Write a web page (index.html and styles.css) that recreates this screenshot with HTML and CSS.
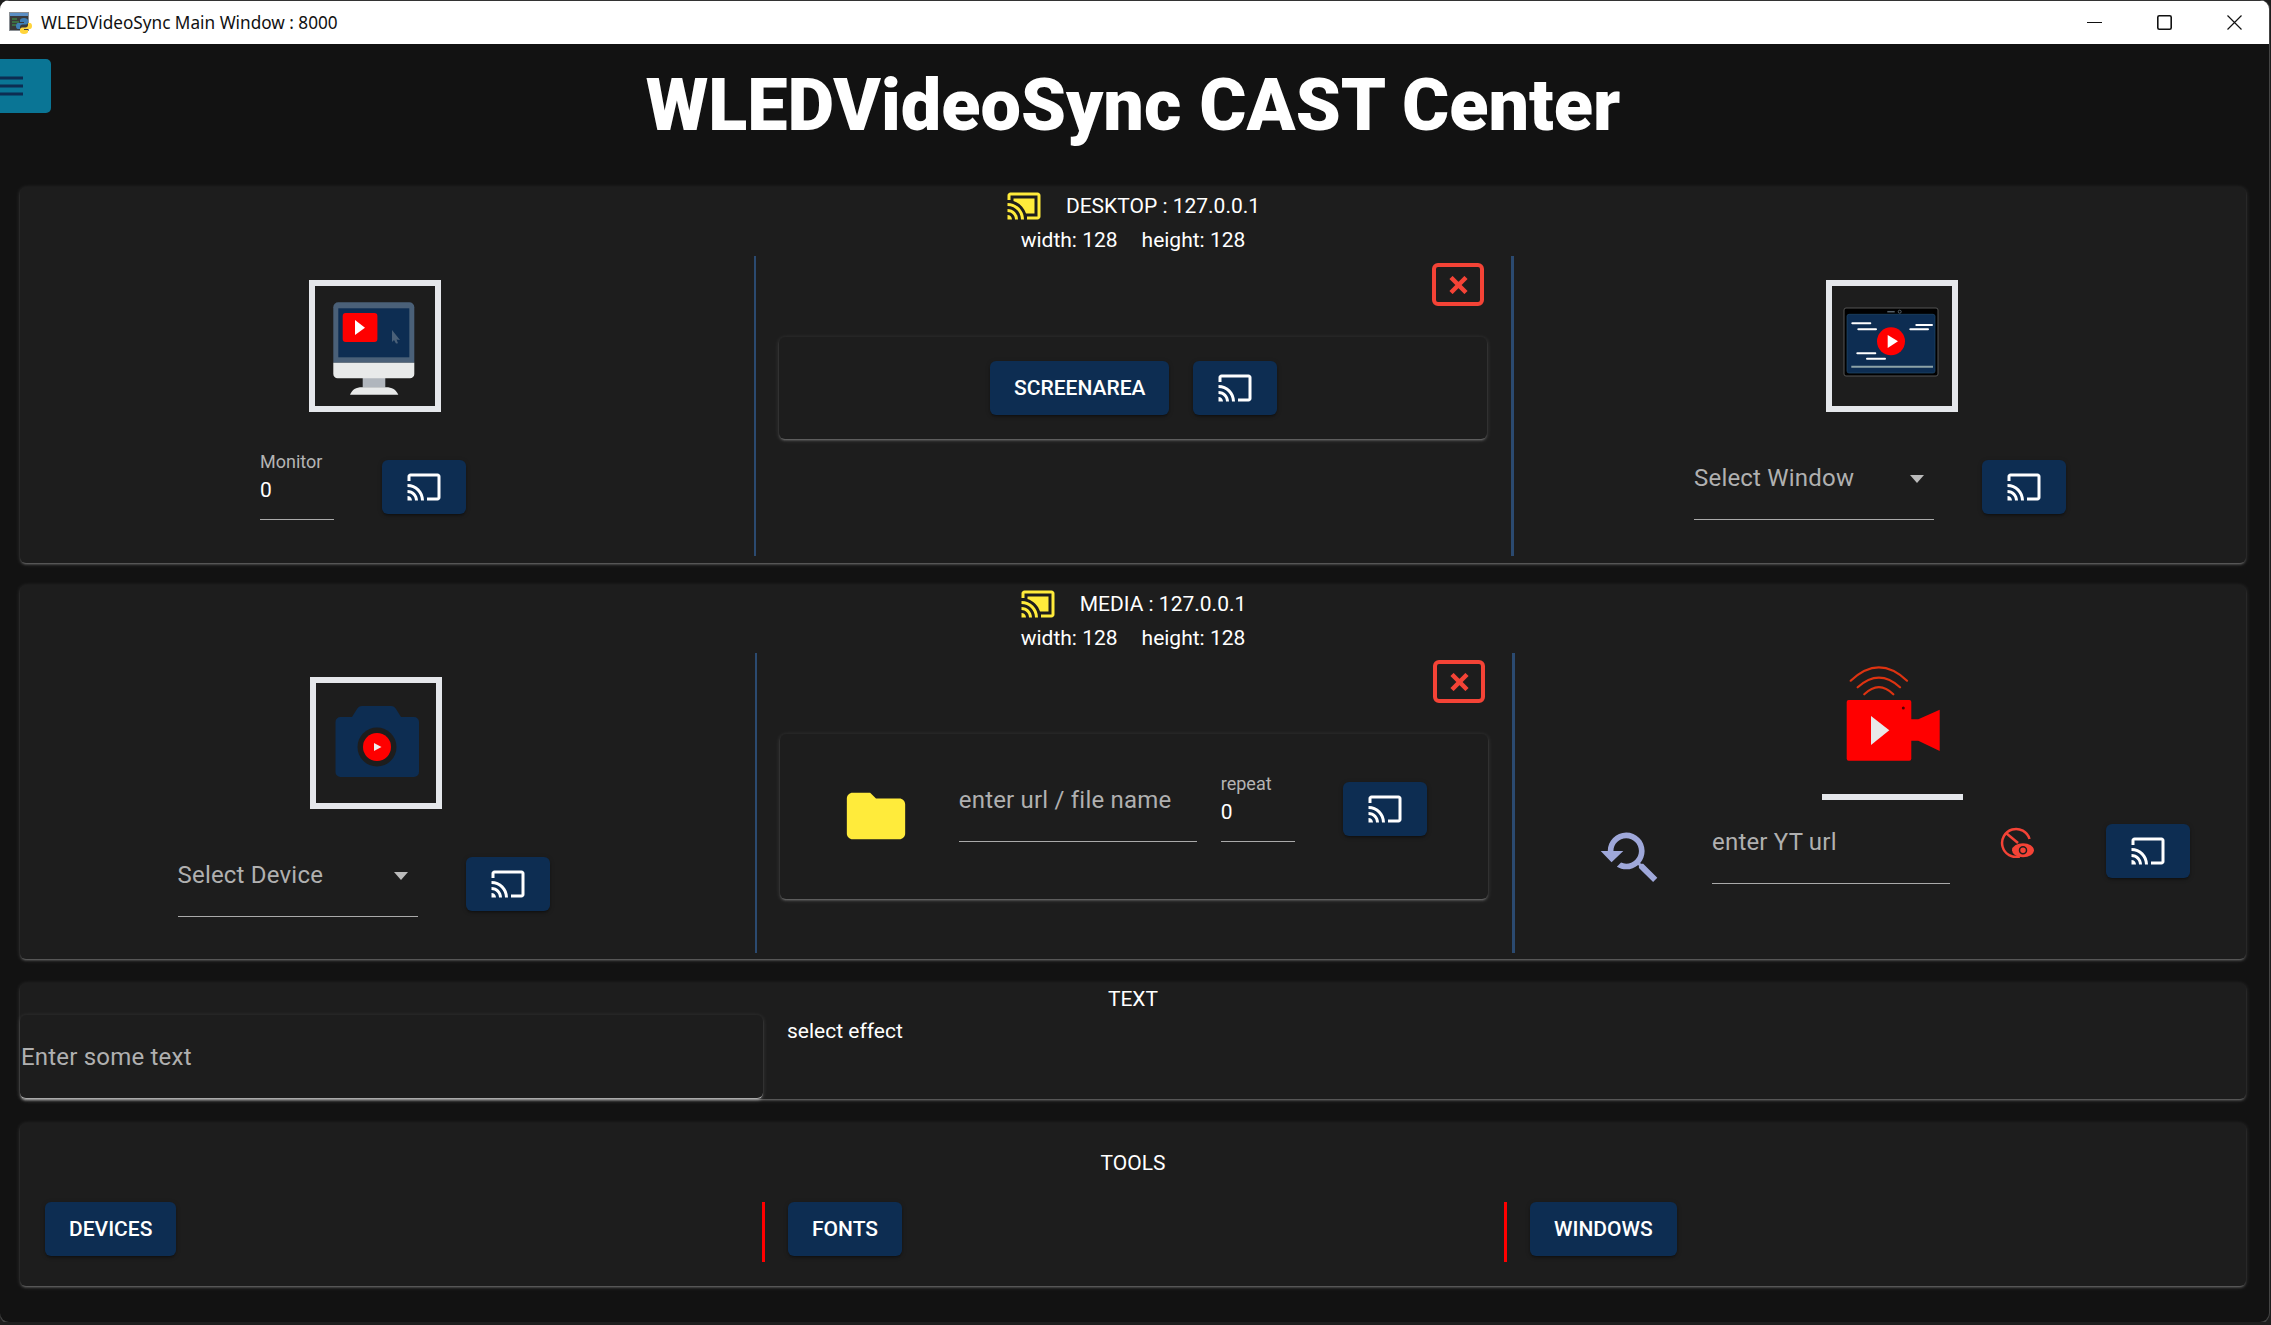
FILE: index.html
```html
<!DOCTYPE html>
<html lang="en">
<head>
    <meta charset="UTF-8">
    <meta name="viewport" content="width=device-width, initial-scale=1.0">
    <title>WLEDVideoSync Main Window : 8000</title>
    <link rel="stylesheet" href="styles.css">
</head>
<body>
    <svg class="defs" width="0" height="0">
        <symbol id="cast" viewBox="0 0 24 24">
            <path d="M21 3H3c-1.1 0-2 .9-2 2v3h2V5h18v14h-7v2h7c1.1 0 2-.9 2-2V5c0-1.1-.9-2-2-2zM1 18v3h3c0-1.66-1.34-3-3-3zm0-4v2c2.76 0 5 2.24 5 5h2c0-3.87-3.13-7-7-7zm0-4v2c4.97 0 9 4.03 9 9h2c0-6.08-4.93-11-11-11z"/>
        </symbol>
        <symbol id="castConnected" viewBox="0 0 24 24">
            <path d="M1 18v3h3c0-1.66-1.34-3-3-3zm0-4v2c2.76 0 5 2.24 5 5h2c0-3.87-3.13-7-7-7zm18-7H5v1.63c3.96 1.28 7.09 4.41 8.37 8.37H19V7zM1 10v2c4.97 0 9 4.03 9 9h2c0-6.08-4.93-11-11-11zm20-7H3c-1.1 0-2 .9-2 2v3h2V5h18v14h-7v2h7c1.1 0 2-.9 2-2V5c0-1.1-.9-2-2-2z"/>
        </symbol>
        <symbol id="closeX" viewBox="0 0 21 18">
            <path d="M3 1.500 18 16.500M18 1.500 3 16.500" fill="none" stroke="#f44336" stroke-width="4.500"/>
        </symbol>
    </svg>

    <div class="window">
        <div class="titlebar">
            <svg class="app-icon" viewBox="0 0 23 22">
                <rect x="0.5" y="0.5" width="19" height="18" fill="#3a3a3a" stroke="#8a8f94"/>
                <rect x="1" y="1" width="18" height="3" fill="#5b8fc4"/>
                <path d="M3 7h5M3 10h7M3 13h4" stroke="#3fa34d" stroke-width="1.2"/>
                <path d="M15 6c-3 0-4 1-4 2.5V10h4v1h-6c-1.5 0-2 1.5-2 3s.5 3 2 3h2v-2c0-1.5 1-2.5 2.5-2.5H17c1 0 2-1 2-2V8.5C19 7 17.500 6 15 6z" fill="#3f7fb5"/>
                <path d="M15 22c3 0 4-1 4-2.500V18h-4v-1h6c1.500 0 2-1.500 2-3s-.5-3-2-3h-2v2c0 1.500-1 2.500-2.500 2.500H13c-1 0-2 1-2 2v2C11 21 12.500 22 15 22z" fill="#ffd43b"/>
            </svg>
            <span class="app-title">WLEDVideoSync Main Window : 8000</span>
            <div class="win-controls">
                <span class="win-btn"><svg width="15" height="15" viewBox="0 0 15 15"><path d="M0 7.500h15" stroke="#111" stroke-width="1.200"/></svg></span>
                <span class="win-btn"><svg width="15" height="15" viewBox="0 0 15 15"><rect x="0.800" y="0.800" width="13.400" height="13.400" rx="1.500" fill="none" stroke="#111" stroke-width="1.600"/></svg></span>
                <span class="win-btn"><svg width="15" height="15" viewBox="0 0 15 15"><path d="M0.500 0.500 14.500 14.500M14.500 0.500 0.500 14.500" stroke="#111" stroke-width="1.200"/></svg></span>
            </div>
        </div>

        <button class="menu-btn">
            <svg width="23" height="24" viewBox="0 0 23 24"><path d="M0 4h23M0 12h23M0 20h23" stroke="#0d2d52" stroke-width="3"/></svg>
        </button>

        <div class="content">
            <h1 class="page-title">WLEDVideoSync CAST Center</h1>

            <section class="card card-desktop">
                <div class="card-head">
                    <div class="head-line">
                        <svg class="cast-status"><use href="#castConnected"/></svg>
                        <span>DESKTOP : 127.0.0.1</span>
                    </div>
                    <div class="head-size"><span>width: 128</span><span>height: 128</span></div>
                </div>
                <div class="columns">
                    <div class="col col-left">
                        <div class="frame frame-shift">
                            <svg class="thumb" viewBox="0 0 120 120">
                                <path d="M18.300 76.700V21.300a5 5 0 0 1 5-5h71a5 5 0 0 1 5 5v55.400z" fill="#4a6078"/>
                                <rect x="23.300" y="22.300" width="71" height="49" fill="#0d2d52"/>
                                <rect x="27.700" y="27" width="34.700" height="29" rx="3" fill="#f00"/>
                                <path d="M40 34 50 41.700 40 49z" fill="#fff"/>
                                <path d="M77 44 85 54 81.500 53.500 83 57.300 81 57.500 79 54 77 56z" fill="#4a6078"/>
                                <path d="M47.700 92h22.600v9.500H47.700z" fill="#b0b6bd"/>
                                <path d="M18.300 76.700h81V88a4.300 4.300 0 0 1-4.300 4.300H22.600a4.300 4.300 0 0 1-4.300-4.300z" fill="#e8eaea"/>
                                <path d="M35 108.700c2-5 6-7.400 12-7.400h24c6 0 10 2.400 12.300 7.400z" fill="#e8eaea"/>
                            </svg>
                        </div>
                        <div class="row">
                            <div class="field field-small">
                                <span class="field-label">Monitor</span>
                                <span class="field-value">0</span>
                            </div>
                            <button class="btn btn-icon btn-offset"><svg class="cast-icon"><use href="#cast"/></svg></button>
                        </div>
                    </div>
                    <div class="col-mid">
                        <button class="close-btn"><svg width="21" height="18"><use href="#closeX"/></svg></button>
                        <div class="inner-card inner-area">
                            <button class="btn">Screenarea</button>
                            <button class="btn btn-icon"><svg class="cast-icon"><use href="#cast"/></svg></button>
                        </div>
                    </div>
                    <div class="col col-right">
                        <div class="frame frame-shift">
                            <svg class="thumb" viewBox="0 0 120 120">
                                <rect x="12" y="22" width="94" height="68" rx="2" fill="#000" stroke="#555"/>
                                <path d="M55.300 25.700h7.400" stroke="#56626b" stroke-width="1.500"/>
                                <circle cx="67.700" cy="25.700" r="1.500" fill="none" stroke="#56626b"/>
                                <rect x="15" y="28.300" width="88" height="58.700" rx="2" fill="#0d2d52" stroke="#1f4768" stroke-width="0.700"/>
                                <path d="M20.300 37.300h18M26.300 43.300H44M84.300 39H100M78.300 43.300H96M25.300 67.300h18M35 72.700h18" stroke="#fff" stroke-width="2" stroke-linecap="round"/>
                                <path d="M19.300 80.700H101" stroke="#8da3a8" stroke-width="2"/>
                                <circle cx="59" cy="55.300" r="14" fill="#f00"/>
                                <path d="M55.700 49 66 55.300 55.700 62z" fill="#fff"/>
                            </svg>
                        </div>
                        <div class="row">
                            <div class="field field-select">
                                <span class="field-hint">Select Window</span>
                                <span class="caret"></span>
                            </div>
                            <button class="btn btn-icon btn-offset"><svg class="cast-icon"><use href="#cast"/></svg></button>
                        </div>
                    </div>
                </div>
            </section>

            <section class="card card-media">
                <div class="card-head">
                    <div class="head-line">
                        <svg class="cast-status"><use href="#castConnected"/></svg>
                        <span>MEDIA : 127.0.0.1</span>
                    </div>
                    <div class="head-size"><span>width: 128</span><span>height: 128</span></div>
                </div>
                <div class="columns">
                    <div class="col col-left">
                        <div class="frame frame-shift">
                            <svg class="thumb" viewBox="0 0 120 120">
                                <path d="M24.500 34H36l5-8c1-2 3-3 5-3h29c2 0 4 1 5 3l5 8h13a5 5 0 0 1 5 5v50a5 5 0 0 1-5 5H24.500a5 5 0 0 1-5-5V39a5 5 0 0 1 5-5z" fill="#0d2d52"/>
                                <circle cx="61" cy="64" r="19.500" fill="#1d1d1d"/>
                                <circle cx="61" cy="64" r="14" fill="#f00"/>
                                <path d="M58 60 65.500 64 58 68z" fill="#eee"/>
                            </svg>
                        </div>
                        <div class="row">
                            <div class="field field-select">
                                <span class="field-hint">Select Device</span>
                                <span class="caret"></span>
                            </div>
                            <button class="btn btn-icon btn-offset"><svg class="cast-icon"><use href="#cast"/></svg></button>
                        </div>
                    </div>
                    <div class="col-mid">
                        <button class="close-btn"><svg width="21" height="18"><use href="#closeX"/></svg></button>
                        <div class="inner-card inner-file">
                            <svg class="folder-icon" viewBox="0 0 24 24"><path d="M10 4H4c-1.100 0-2 .9-2 2v12c0 1.100.9 2 2 2h16c1.100 0 2-.9 2-2V8c0-1.100-.9-2-2-2h-8l-2-2z"/></svg>
                            <div class="field field-url"><span class="field-hint">enter url / file name</span></div>
                            <div class="field field-small field-repeat">
                                <span class="field-label">repeat</span>
                                <span class="field-value">0</span>
                            </div>
                            <button class="btn btn-icon btn-offset"><svg class="cast-icon"><use href="#cast"/></svg></button>
                        </div>
                    </div>
                    <div class="col col-yt">
                        <div class="yt-frame">
                            <svg width="141" height="130" viewBox="0 0 141 130">
                                <path d="M28.700 16.700Q57 -10 85 16.700M35.700 23.300Q57 4 78 23.300M42.300 30.300Q57 16 71.300 30.300" fill="none" stroke="#dd3311" stroke-width="2.200" stroke-linecap="round"/>
                                <rect x="24.700" y="36" width="64.600" height="60.700" rx="2" fill="#f00"/>
                                <circle cx="81.300" cy="44" r="1.500" fill="#500"/>
                                <path d="M89 55.300h7.300l21.400-9.600V87L96.300 76.700H89z" fill="#f00"/>
                                <path d="M49 52 67.300 66.300 49 81z" fill="#e8e8e8"/>
                            </svg>
                        </div>
                        <div class="row">
                            <svg class="search-icon" viewBox="0 0 24 24"><path d="M17.010 14h-.8l-.27-.27c.98-1.140 1.570-2.610 1.570-4.230 0-3.590-2.910-6.500-6.500-6.500s-6.500 3-6.500 6.500H2l3.840 4 4.160-4H6.510C6.510 7 8.530 5 11.010 5s4.500 2.010 4.500 4.500c0 2.480-2.020 4.500-4.500 4.500-.65 0-1.260-.14-1.820-.38L7.710 15.100c.97.57 2.090.9 3.300.9 1.610 0 3.080-.59 4.220-1.570l.27.27v.79l5.010 5L21.990 19l-4.980-5z"/></svg>
                            <div class="field field-yt"><span class="field-hint">enter YT url</span></div>
                            <svg class="hidden-icon" viewBox="0 0 34 31">
                                <path d="M19.700 29.500A14 14 0 1 1 29.500 12" fill="none" stroke="#f44336" stroke-width="2.500"/>
                                <path d="M6 6 18 16" stroke="#f44336" stroke-width="2.500"/>
                                <ellipse cx="23" cy="23.300" rx="11" ry="7" fill="#f44336"/>
                                <circle cx="23" cy="23.300" r="3.500" fill="none" stroke="#1d1d1d" stroke-width="1.500"/>
                            </svg>
                            <button class="btn btn-icon btn-offset btn-yt"><svg class="cast-icon"><use href="#cast"/></svg></button>
                        </div>
                    </div>
                </div>
            </section>

            <section class="card card-text">
                <div class="card-caption">TEXT</div>
                <div class="text-row">
                    <div class="text-input"><span class="field-hint">Enter some text</span></div>
                    <div class="effect-label">select effect</div>
                </div>
            </section>

            <section class="card card-tools">
                <div class="card-caption">TOOLS</div>
                <div class="tools-row">
                    <div class="tool-cell"><button class="btn">Devices</button></div>
                    <div class="tool-cell"><button class="btn">Fonts</button></div>
                    <div class="tool-cell"><button class="btn">Windows</button></div>
                </div>
            </section>
        </div>
    </div>
</body>
</html>
```

FILE: styles.css
```css
* {
    box-sizing: border-box;
}
body {
    margin: 0;
    background-color: #1e1e1e;
    color: #fff;
    font-family: Roboto, "Liberation Sans", sans-serif;
    font-size: 21px;
    overflow: hidden;
}
.defs {
    position: absolute;
}
.window {
    position: relative;
    width: 2269px;
    height: 1322px;
    background-color: #121212;
    border-radius: 9px;
    box-shadow: 0 2px 0 #444, 1px 0 0 #444;
    overflow: hidden;
}
.titlebar {
    display: flex;
    align-items: center;
    height: 44px;
    background-color: #fff;
    border-top: 1px solid #333;
    color: #111;
    padding-left: 9px;
}
.app-icon {
    width: 23px;
    height: 22px;
}
.app-title {
    margin-left: 9px;
    font-family: "Noto Sans", sans-serif;
    font-size: 17.2px;
}
.win-controls {
    display: flex;
    margin-left: auto;
}
.win-btn {
    display: flex;
    align-items: center;
    justify-content: center;
    width: 70px;
    height: 43px;
}
.menu-btn {
    position: absolute;
    left: 0;
    top: 59px;
    display: flex;
    align-items: center;
    width: 51px;
    height: 54px;
    padding: 0;
    background-color: #0a7595;
    border: none;
    border-radius: 0 5px 5px 0;
}
.content {
    padding-left: 20px;
    width: 2246px;
}
.page-title {
    margin: 0 0 25px;
    padding-top: 3px;
    height: 118px;
    font-size: 72px;
    font-weight: 900;
    line-height: 118px;
    text-align: center;
}
.card, .inner-card, .text-input {
    background-color: #1d1d1d;
    border-radius: 6px;
    box-shadow: 0 1px 5px rgba(255, 255, 255, 0.15), 0 2px 2px rgba(255, 255, 255, 0.14), 0 3px 1px -2px rgba(255, 255, 255, 0.12);
}
.card-desktop {
    height: 376px;
    margin-bottom: 22px;
}
.card-media {
    height: 374px;
    margin-bottom: 24px;
}
.card-text {
    height: 116px;
    margin-bottom: 24px;
}
.card-tools {
    height: 163px;
}
.card-head {
    height: 69px;
    padding-top: 2px;
    line-height: 34px;
    text-align: center;
}
.card-media .card-head {
    height: 68px;
}
.head-line {
    display: flex;
    align-items: center;
    justify-content: center;
    gap: 24px;
    height: 34px;
}
.cast-status {
    width: 36px;
    height: 36px;
    fill: #ffeb3b;
}
.head-size {
    display: flex;
    justify-content: center;
    gap: 24px;
}
.columns {
    display: flex;
    height: 300px;
}
.col {
    display: flex;
    flex-direction: column;
    align-items: center;
    padding-top: 24px;
}
.col-left {
    width: 734px;
    padding-right: 48px;
}
.card-media .col-left {
    padding-right: 47px;
}
.col-mid {
    display: flex;
    flex-direction: column;
    width: 760px;
    padding: 7px 24px 0 22.5px;
    border-left: 2.5px solid #2b4a70;
    border-right: 3px solid #2b4a70;
}
.card-media .col-mid {
    margin-left: 1px;
}
.col-right {
    flex: 1;
}
.col-yt {
    flex: 1;
    padding-top: 11px;
    padding-left: 24px;
}
.frame {
    width: 132px;
    height: 132px;
    border: 6px solid #e5e7eb;
}
.frame-shift {
    margin-left: 24px;
}
.thumb {
    display: block;
    width: 120px;
    height: 120px;
}
.yt-frame {
    width: 141px;
    height: 136px;
    border-bottom: 6px solid #e5e7eb;
}
.row {
    display: flex;
    margin-top: 24px;
}
.col-yt .row {
    margin-top: 0;
}
.field {
    height: 84px;
    border-bottom: 1.5px solid #aaa;
}
.field-small {
    display: flex;
    flex-direction: column;
    width: 74px;
    padding-top: 13px;
}
.field-label {
    font-size: 18px;
    line-height: 26px;
    color: #b4b4b4;
}
.field-value {
    line-height: 30px;
}
.field-hint {
    font-size: 24px;
    letter-spacing: 0.2px;
    color: #b0b0b0;
}
.field-select, .field-url, .field-yt {
    display: flex;
    align-items: center;
    line-height: 84px;
}
.field-select {
    justify-content: space-between;
    width: 240px;
    padding-right: 10px;
}
.caret {
    width: 0;
    height: 0;
    margin-top: 2px;
    border-left: 7.5px solid transparent;
    border-right: 7.5px solid transparent;
    border-top: 8px solid #bbb;
}
.field-url, .field-yt {
    width: 238px;
}
.field-url {
    margin-left: 48px;
}
.field-repeat {
    margin-left: 24px;
}
.field-yt {
    margin-left: 49px;
}
.btn {
    height: 54px;
    padding: 0 24px;
    background-color: #0d2d52;
    color: #fff;
    border: none;
    border-radius: 6px;
    font-family: Roboto, "Liberation Sans", sans-serif;
    font-size: 21px;
    font-weight: 500;
    text-transform: uppercase;
    box-shadow: 0 1px 5px rgba(0, 0, 0, 0.2), 0 2px 2px rgba(0, 0, 0, 0.14), 0 3px 1px -2px rgba(0, 0, 0, 0.12);
}
.btn-icon {
    display: flex;
    align-items: center;
    justify-content: center;
    width: 84px;
    padding: 0;
}
.btn-offset {
    margin-top: 24px;
    margin-left: 48px;
}
.btn-yt {
    margin-left: 72px;
}
.cast-icon {
    width: 36px;
    height: 36px;
    fill: #fff;
}
.close-btn {
    display: flex;
    align-items: center;
    justify-content: center;
    align-self: flex-end;
    width: 52px;
    height: 43px;
    margin: 0 3px 31px 0;
    padding: 0;
    background: none;
    border: 4px solid #f44336;
    border-radius: 6px;
}
.inner-area {
    display: flex;
    justify-content: center;
    gap: 24px;
    height: 102px;
    padding-top: 24px;
    padding-left: 2px;
}
.inner-file {
    display: flex;
    justify-content: center;
    height: 165px;
    padding-top: 24px;
}
.folder-icon {
    width: 70px;
    height: 70px;
    margin-top: 23px;
    fill: #ffeb3b;
}
.search-icon {
    width: 68px;
    height: 68px;
    margin-top: 24px;
    fill: #9fa8da;
}
.hidden-icon {
    width: 34px;
    height: 31px;
    margin-top: 27px;
    margin-left: 50px;
}
.card-caption {
    line-height: 30px;
    text-align: center;
    padding-top: 1px;
    margin-bottom: 1px;
}
.card-tools .card-caption {
    line-height: 32px;
    padding-top: 24px;
    margin-bottom: 23px;
}
.text-row {
    display: flex;
}
.text-input {
    display: flex;
    align-items: center;
    width: 743px;
    height: 84px;
    padding-left: 1px;
    border-bottom: 1.5px solid #aaa;
}
.effect-label {
    margin-left: 24px;
    margin-top: -1px;
    line-height: 34px;
}
.tools-row {
    display: grid;
    grid-template-columns: 1fr 1fr 1fr;
}
.tool-cell {
    height: 60px;
    padding-left: 25px;
}
.tool-cell + .tool-cell {
    padding-left: 23px;
    border-left: 3px solid #f00;
}
```
